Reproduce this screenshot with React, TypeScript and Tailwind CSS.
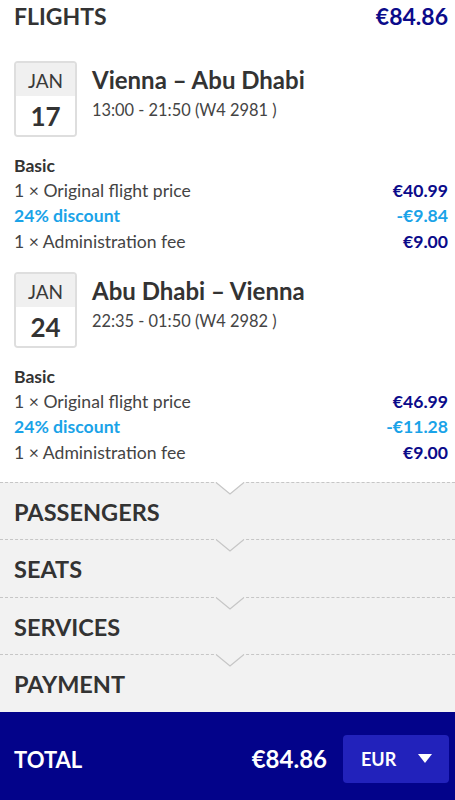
import React from 'react';

interface Flight {
  month: string;
  day: string;
  route: string;
  times: string;
  price: string;
  discount: string;
  fee: string;
}

const flights: Flight[] = [
  {
    month: 'JAN',
    day: '17',
    route: 'Vienna – Abu Dhabi',
    times: '13:00 - 21:50 (W4 2981 )',
    price: '€40.99',
    discount: '-€9.84',
    fee: '€9.00',
  },
  {
    month: 'JAN',
    day: '24',
    route: 'Abu Dhabi – Vienna',
    times: '22:35 - 01:50 (W4 2982 )',
    price: '€46.99',
    discount: '-€11.28',
    fee: '€9.00',
  },
];

const sections = ['PASSENGERS', 'SEATS', 'SERVICES', 'PAYMENT'];

const FlightBlock: React.FC<{ flight: Flight }> = ({ flight }) => (
  <div className="pl-[14px] pr-[7px]">
    <div className="flex items-start gap-[15px]">
      <div className="w-[63px] h-[76px] rounded-[4px] border-2 border-[#dedede] overflow-hidden flex flex-col shrink-0">
        <div className="h-[33px] bg-[#f0f0f0] flex items-center justify-center text-[19px] text-[#3a3a3a] leading-none pt-[2px]">
          {flight.month}
        </div>
        <div className="flex-1 bg-white flex items-center justify-center text-[26px] font-bold text-[#333] leading-none">
          {flight.day}
        </div>
      </div>
      <div className="pt-[4px]">
        <div className="text-[24px] font-bold text-[#333] leading-[30px]">{flight.route}</div>
        <div className="text-[16.4px] text-[#444] leading-[22px] mt-[4px]">{flight.times}</div>
      </div>
    </div>
    <div className="mt-[15.5px] text-[17.6px] leading-[25.5px]">
      <div className="font-bold text-[#333] leading-[25px]">Basic</div>
      <div className="flex justify-between text-[#444]">
        <span>1 × Original flight price</span>
        <span className="font-bold text-[#0b0b8a]">{flight.price}</span>
      </div>
      <div className="flex justify-between font-bold text-[#1aa3e8]">
        <span>24% discount</span>
        <span>{flight.discount}</span>
      </div>
      <div className="flex justify-between text-[#444]">
        <span>1 × Administration fee</span>
        <span className="font-bold text-[#0b0b8a]">{flight.fee}</span>
      </div>
    </div>
  </div>
);

export default function App() {
  return (
    <div className="w-[455px] h-[800px] bg-white flex flex-col overflow-hidden" style={{ fontFamily: 'Lato, "Noto Sans", sans-serif' }}>
      <div className="flex justify-between items-center pl-[14px] pr-[7px] h-[32px] shrink-0">
        <span className="text-[23px] font-bold text-[#333]">FLIGHTS</span>
        <span className="text-[23px] font-bold text-[#0b0b8a]">€84.86</span>
      </div>

      <div className="mt-[29px] flex flex-col gap-[18px]">
        {flights.map((f) => (
          <FlightBlock key={f.day} flight={f} />
        ))}
      </div>

      <div className="mt-[16.5px] bg-[#f2f2f2] flex flex-col shrink-0">
        {sections.map((s, i) => (
          <div key={s} className="relative h-[57.5px] border-t border-dashed border-[#c6c6c6] flex items-center px-[14px]">
            <svg
              className="absolute left-[216px] -top-[1px]"
              width="28"
              height="13"
              viewBox="0 0 28 13"
            >
              <polygon points="0,0 14,12 28,0" fill={i === 0 ? '#ffffff' : '#f2f2f2'} />
              <polyline points="0,0.5 14,12 28,0.5" fill="none" stroke="#c6c6c6" strokeWidth="1.3" />
            </svg>
            <span className="text-[23.5px] font-bold text-[#333] pt-[3px]">{s}</span>
          </div>
        ))}
      </div>

      <div className="flex-1 bg-[#03038a] flex items-center pl-[14px] pr-[6px] pt-[7px] gap-[16px]">
        <span className="text-[22px] font-bold text-white flex-1">TOTAL</span>
        <span className="text-[24px] font-bold text-white">€84.86</span>
        <button className="w-[106px] h-[48px] rounded-[4px] bg-[#2222bb] flex items-center justify-between pl-[18px] pr-[17px]">
          <span className="text-[18px] font-bold text-white">EUR</span>
          <svg width="14" height="10" viewBox="0 0 14 10">
            <polygon points="0,0 14,0 7,9" fill="white" />
          </svg>
        </button>
      </div>
    </div>
  );
}
